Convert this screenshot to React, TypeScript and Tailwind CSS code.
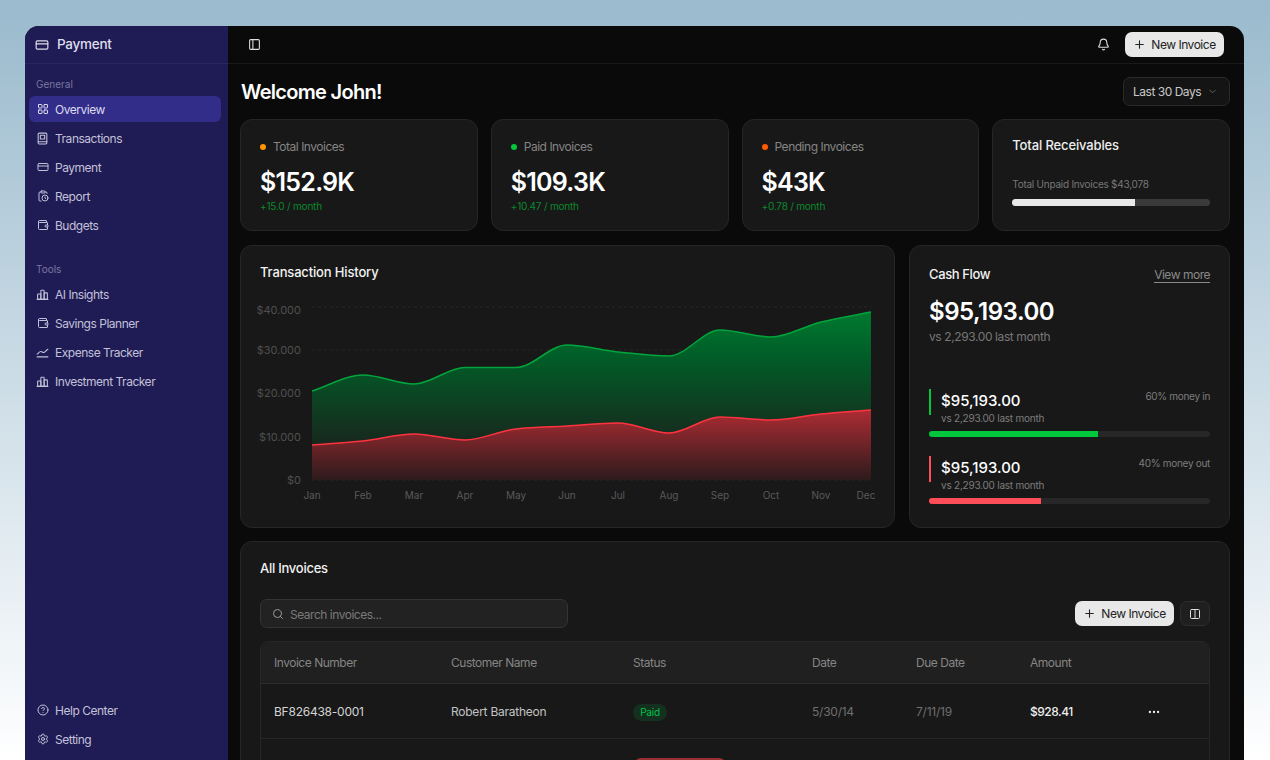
import React from "react";
import {
  Bell,
  ChevronDown,
  CircleHelp,
  ClipboardClock,
  Columns2,
  CreditCard,
  Ellipsis,
  LayoutGrid,
  PanelLeft,
  Plus,
  Search,
  Settings,
  Wallet,
} from "lucide-react";

function TrackerIcon() {
  return (
    <svg width="13" height="13" viewBox="0 0 24 24" fill="none" stroke="currentColor" strokeWidth="2" strokeLinecap="round" strokeLinejoin="round">
      <path d="M2 20h20" />
      <path d="M2 15c2-1 4-5 7-5 2 0 3 2 5 2 3 0 4-4 8-6" />
    </svg>
  );
}

function BarsIcon() {
  return (
    <svg width="13" height="13" viewBox="0 0 24 24" fill="none" stroke="currentColor" strokeWidth="2" strokeLinecap="round" strokeLinejoin="round">
      <path d="M3 21V12a1 1 0 0 1 1-1h5v10z" />
      <path d="M9 21V5a1 1 0 0 1 1-1h4a1 1 0 0 1 1 1v16z" />
      <path d="M15 21V9h5a1 1 0 0 1 1 1v11z" />
      <path d="M2 21h20" />
    </svg>
  );
}

function ReceiptIcon() {
  return (
    <svg width="13" height="13" viewBox="0 0 24 24" fill="none" stroke="currentColor" strokeWidth="2" strokeLinecap="round" strokeLinejoin="round">
      <rect x="4" y="2" width="16" height="20" rx="2" />
      <rect x="8" y="6" width="8" height="7" />
      <path d="M4 18h16" />
    </svg>
  );
}

function NavItem({ icon, label, active }: { icon: React.ReactNode; label: string; active?: boolean }) {
  return (
    <div className={`flex h-[26px] items-center gap-[6px] rounded-[6px] px-[7px] text-[12px] tracking-[-0.04em] ${active ? "bg-[#332d8a] text-[#dcdbee]" : "text-[#c3c1d9]"}`}>
      <span className="flex w-[13px] justify-center">{icon}</span>
      <span className="pt-[1px]">{label}</span>
    </div>
  );
}

function StatCard({ dot, label, value, change }: { dot: string; label: string; value: string; change: string }) {
  return (
    <div className="h-[112px] rounded-[12px] border border-[#262626] bg-[#181818] px-[19px] pt-[18px]">
      <div className="flex items-center gap-[7px] text-[12px] tracking-[-0.04em] text-[#858585]">
        <span className={`size-[6px] rounded-full ${dot}`} />
        {label}
      </div>
      <div className="mt-[8px] text-[25px] leading-[36px] font-semibold tracking-[-0.03em] text-white">{value}</div>
      <div className="text-[10px] leading-[12px] tracking-[-0.02em] text-[#0b8a2d]">{change}</div>
    </div>
  );
}

function FlowRow({ bar, fill, width, caption }: { bar: string; fill: string; width: string; caption: string }) {
  return (
    <div>
      <div className="flex items-start justify-between">
        <div className="flex gap-[10px]">
          <span className={`h-[26px] w-[2px] ${bar}`} />
          <div>
            <div className="mt-[3px] text-[15px] leading-[18px] font-medium text-white">$95,193.00</div>
            <div className="mt-[1px] text-[10px] leading-[14px] tracking-[-0.023em] text-[#7d7d7d]">vs 2,293.00 last month</div>
          </div>
        </div>
        <div className="text-[10px] leading-[14px] tracking-[-0.03em] text-[#7d7d7d]">{caption}</div>
      </div>
      <div className="mt-[6px] h-[6px] overflow-hidden rounded-full bg-[#272727]">
        <div className={`h-full ${fill} ${width}`} />
      </div>
    </div>
  );
}

const months = ["Jan", "Feb", "Mar", "Apr", "May", "Jun", "Jul", "Aug", "Sep", "Oct", "Nov", "Dec"];
const xs = [312, 363, 414, 465, 516, 567, 618, 669, 720, 771, 821, 871];
const green = [391, 375, 384, 367.5, 367.5, 345, 352, 356, 330, 337, 322, 312];
const red = [445, 441, 434, 440, 429, 426, 423, 433, 417, 420, 414, 410];

// monotone curve through the points, same look as a chart library's area
function curve(ys: number[]) {
  const slopes = ys.map((y, i) => {
    if (i === 0) return (ys[1] - y) / (xs[1] - xs[0]);
    if (i === ys.length - 1) return (y - ys[i - 1]) / (xs[i] - xs[i - 1]);
    const a = (y - ys[i - 1]) / (xs[i] - xs[i - 1]);
    const b = (ys[i + 1] - y) / (xs[i + 1] - xs[i]);
    return a * b <= 0 ? 0 : (2 * a * b) / (a + b);
  });
  let d = `M${xs[0]} ${ys[0]}`;
  for (let i = 1; i < ys.length; i++) {
    const h = (xs[i] - xs[i - 1]) / 3;
    d += `C${xs[i - 1] + h} ${ys[i - 1] + slopes[i - 1] * h} ${xs[i] - h} ${ys[i] - slopes[i] * h} ${xs[i]} ${ys[i]}`;
  }
  return d;
}

function HistoryChart() {
  const greenLine = curve(green);
  const redLine = curve(red);
  return (
    <svg width="630" height="210" viewBox="260 298 630 210" className="mt-[17px] block overflow-visible">
      <defs>
        <linearGradient id="greenFill" gradientUnits="userSpaceOnUse" x1="0" y1="312" x2="0" y2="450">
          <stop offset="0" stopColor="#007a30" />
          <stop offset="0.3" stopColor="#005f28" />
          <stop offset="1" stopColor="#19241c" />
        </linearGradient>
        <linearGradient id="redFill" gradientUnits="userSpaceOnUse" x1="0" y1="410" x2="0" y2="480">
          <stop offset="0" stopColor="#ad2c33" />
          <stop offset="1" stopColor="#2d1b1c" />
        </linearGradient>
      </defs>
      {[307, 350, 393, 436, 480].map((y) => (
        <line key={y} x1="312" x2="871" y1={y} y2={y} stroke="#272727" strokeDasharray="3 3" />
      ))}
      <path d={`${greenLine}L871 480L312 480Z`} fill="url(#greenFill)" />
      <path d={greenLine} fill="none" stroke="#00a53c" strokeWidth="1.5" />
      <path d={`${redLine}L871 480L312 480Z`} fill="url(#redFill)" />
      <path d={redLine} fill="none" stroke="#ff3340" strokeWidth="1.5" />
      {[
        ["$40.000", 314],
        ["$30.000", 354],
        ["$20.000", 397],
        ["$10.000", 441],
        ["$0", 484],
      ].map(([t, y]) => (
        <text key={t} x="301" y={y} textAnchor="end" fontSize="11" fill="#4f4f4f">
          {t}
        </text>
      ))}
      {months.map((m, i) => (
        <text key={m} x={i === 11 ? 866 : xs[i]} y="499" textAnchor="middle" fontSize="10" fill="#5a5a5a">
          {m}
        </text>
      ))}
    </svg>
  );
}

function NewInvoiceButton() {
  return (
    <button className="flex h-[25px] w-[99px] items-center justify-center gap-[5px] rounded-[7px] bg-[#e8e8e8] text-[12px] tracking-[-0.04em] text-[#222222]">
      <Plus size={13} />
      New Invoice
    </button>
  );
}

const tableCols = "grid grid-cols-[177px_182px_179px_104px_114px_117px_1fr] items-center pt-[1px] pl-[13px]";

export default function App() {
  return (
    <div className="h-screen overflow-hidden bg-linear-to-b from-[#9abacd] to-[#ffffff] pt-[26px] pr-[26px] pl-[25px] font-[family-name:Inter,sans-serif]">
      <div className="flex h-[760px] overflow-hidden rounded-t-[14px] bg-[#0a0a0a]">
        <aside className="flex h-[734px] w-[203px] shrink-0 flex-col bg-[#1f1b54]">
          <div className="flex h-[38px] items-center gap-[8px] border-b border-[#2a2662] px-[10px] text-[13.5px] font-medium tracking-[-0.02em] text-[#dfdeeb]">
            <CreditCard size={14} />
            Payment
          </div>
          <div className="mt-[13px] px-[11px] text-[10px] leading-[14px] text-[#7a77a0]">General</div>
          <nav className="mt-[5px] flex flex-col gap-[3px] pr-[7px] pl-[4px]">
            <NavItem active icon={<LayoutGrid size={12} />} label="Overview" />
            <NavItem icon={<ReceiptIcon />} label="Transactions" />
            <NavItem icon={<CreditCard size={12} />} label="Payment" />
            <NavItem icon={<ClipboardClock size={12} />} label="Report" />
            <NavItem icon={<Wallet size={12} />} label="Budgets" />
          </nav>
          <div className="mt-[24px] px-[11px] text-[10px] leading-[14px] text-[#7a77a0]">Tools</div>
          <nav className="mt-[5px] flex flex-col gap-[3px] pr-[7px] pl-[4px]">
            <NavItem icon={<BarsIcon />} label="AI Insights" />
            <NavItem icon={<Wallet size={12} />} label="Savings Planner" />
            <NavItem icon={<TrackerIcon />} label="Expense Tracker" />
            <NavItem icon={<BarsIcon />} label="Investment Tracker" />
          </nav>
          <nav className="mt-auto flex flex-col gap-[3px] pr-[7px] pb-[8px] pl-[4px]">
            <NavItem icon={<CircleHelp size={12} />} label="Help Center" />
            <NavItem icon={<Settings size={12} />} label="Setting" />
          </nav>
        </aside>

        <main className="min-w-0 flex-1">
          <header className="flex h-[38px] items-center border-b border-[#1a1a1a] pr-[20px] pl-[20px] text-[#dddddd]">
            <PanelLeft size={13} />
            <div className="ml-auto flex items-center gap-[15px]">
              <Bell size={13} />
              <NewInvoiceButton />
            </div>
          </header>

          <div className="pt-[13px] pr-[14px] pl-[12px]">
            <div className="flex h-[29px] items-center justify-between">
              <h1 className="ml-[1px] text-[20px] font-semibold tracking-[-0.035em] text-white">Welcome John!</h1>
              <div className="flex h-[29px] w-[107px] items-center justify-between rounded-[7px] border border-[#2a2a2a] bg-[#141414] pr-[11px] pl-[9px] text-[12px] tracking-[-0.04em] text-[#c8c8c8]">
                Last 30 Days
                <ChevronDown size={11} className="text-[#666666]" />
              </div>
            </div>

            <div className="mt-[13px] grid grid-cols-4 gap-[13px]">
              <StatCard dot="bg-[#ff9500]" label="Total Invoices" value="$152.9K" change="+15.0 / month" />
              <StatCard dot="bg-[#00c73c]" label="Paid Invoices" value="$109.3K" change="+10.47 / month" />
              <StatCard dot="bg-[#ff5c00]" label="Pending Invoices" value="$43K" change="+0.78 / month" />
              <div className="h-[112px] rounded-[12px] border border-[#262626] bg-[#181818] px-[19px] pt-[16px]">
                <div className="text-[13px] leading-[18px] font-medium tracking-[-0.01em] text-[#eeeeee]">Total Receivables</div>
                <div className="mt-[23px] text-[10px] leading-[14px] tracking-[-0.025em] text-[#777777]">Total Unpaid Invoices $43,078</div>
                <div className="mt-[8px] h-[7px] overflow-hidden rounded-full bg-[#3a3a3a]">
                  <div className="h-full w-[62%] bg-[#e8e8e8]" />
                </div>
              </div>
            </div>

            <div className="mt-[14px] flex gap-[14px]">
              <section className="h-[283px] w-[655px] shrink-0 rounded-[12px] border border-[#262626] bg-[#181818] pt-[17px] pl-[19px]">
                <h2 className="text-[13px] leading-[18px] font-medium tracking-[-0.012em] text-[#f2f2f2]">Transaction History</h2>
                <HistoryChart />
              </section>
              <section className="h-[283px] flex-1 rounded-[12px] border border-[#262626] bg-[#181818] px-[19px] pt-[19px]">
                <div className="flex items-center justify-between">
                  <h2 className="text-[13px] leading-[18px] font-medium tracking-[-0.03em] text-[#f2f2f2]">Cash Flow</h2>
                  <span className="border-b border-[#8a8a8a] pt-[1px] text-[12px] leading-[15px] tracking-[-0.04em] text-[#8a8a8a]">View more</span>
                </div>
                <div className="mt-[12px] text-[24px] leading-[34px] font-semibold tracking-[-0.02em] text-white">$95,193.00</div>
                <div className="text-[12px] leading-[16px] tracking-[-0.033em] text-[#777777]">vs 2,293.00 last month</div>
                <div className="mt-[44px] flex flex-col gap-[19px]">
                  <FlowRow bar="bg-[#00c73c]" fill="bg-[#00c73c]" width="w-[60%]" caption="60% money in" />
                  <FlowRow bar="bg-[#ff4d5a]" fill="bg-[#ff4d5a]" width="w-[40%]" caption="40% money out" />
                </div>
              </section>
            </div>

            <section className="mt-[13px] rounded-[12px] border border-[#262626] bg-[#181818] px-[19px] pt-[17px] pb-[19px]">
              <h2 className="text-[13px] leading-[18px] font-medium tracking-[-0.02em] text-[#f2f2f2]">All Invoices</h2>
              <div className="mt-[22px] flex items-center justify-between">
                <div className="flex h-[29px] w-[308px] items-center gap-[6px] rounded-[7px] border border-[#343434] bg-[#222222] px-[11px] text-[12px] tracking-[-0.04em] text-[#7a7a7a]">
                  <Search size={12} className="text-[#999999]" />
                  <span className="pt-[2px]">Search invoices...</span>
                </div>
                <div className="flex items-center gap-[6px]">
                  <NewInvoiceButton />
                  <div className="flex h-[25px] w-[30px] items-center justify-center rounded-[7px] border border-[#2e2e2e] bg-[#1f1f1f] text-[#dddddd]">
                    <Columns2 size={12} />
                  </div>
                </div>
              </div>

              <div className="mt-[13px] overflow-hidden rounded-[8px] border border-[#262626]">
                <div className={`${tableCols} h-[42px] border-b border-[#2c2c2c] bg-[#202020] text-[12px] tracking-[-0.04em] text-[#858585]`}>
                  <span>Invoice Number</span>
                  <span>Customer Name</span>
                  <span>Status</span>
                  <span>Date</span>
                  <span>Due Date</span>
                  <span>Amount</span>
                </div>
                <div className={`${tableCols} h-[55px] border-b border-[#262626] text-[12px] tracking-[-0.02em]`}>
                  <span className="text-[#d4d4d4]">BF826438-0001</span>
                  <span className="text-[#c2c2c2]">Robert Baratheon</span>
                  <span>
                    <span className="inline-flex h-[17px] w-[34px] items-center justify-center rounded-full bg-[#14301f] text-[10px] text-[#00c24a]">Paid</span>
                  </span>
                  <span className="text-[#6f6f6f]">5/30/14</span>
                  <span className="text-[#6f6f6f]">7/11/19</span>
                  <span className="font-medium tracking-[-0.04em] text-[#eeeeee]">$928.41</span>
                  <span className="text-[#eeeeee]">
                    <Ellipsis size={14} />
                  </span>
                </div>
                <div className={`${tableCols} h-[55px] border-b border-[#262626]`}>
                  <span />
                  <span />
                  <span className="h-[17px] w-[94px] rounded-full bg-[#9a2f35]" />
                </div>
              </div>
            </section>
          </div>
        </main>
      </div>
    </div>
  );
}
